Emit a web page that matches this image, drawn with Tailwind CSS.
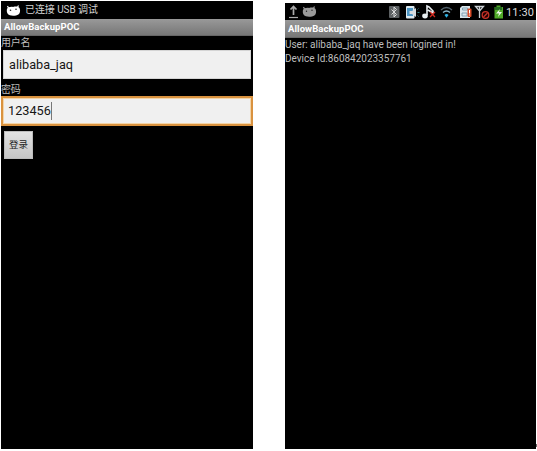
<!DOCTYPE html>
<html lang="zh-CN">
<head>
<meta charset="utf-8">
<title>AllowBackupPOC</title>
<script src="https://cdn.jsdelivr.net/npm/@tailwindcss/browser@4"></script>
</head>
<body class="bg-white w-[537px] h-[451px] overflow-hidden flex items-start font-['Roboto','Noto_Sans_CJK_SC',sans-serif] whitespace-nowrap">
<main class="ml-px mt-px w-[252px] h-[448px] bg-black flex flex-col shrink-0">
  <header class="h-[18px] flex items-center pl-[5px] pb-[2px] text-[10px] text-[#d2d2d2]">
    <svg class="w-[15px] h-[13px] mr-1 mt-[2px] shrink-0" viewBox="0 0 15 13"><path d="M2.500 4 1.500 2M11.400 3.500 12.500 1.500" stroke="#fff" stroke-width="1.200"/><path d="M.8 5.800C1.200 3 4 2.700 7 2.900c3-.6 5.800-.5 6.700 1.600.8 2.300.3 4.800-1.300 6-1.900 1.300-6.100 1.700-8.500.8C1.500 10.500.6 8.500.8 5.800Z" fill="#fff"/><circle cx="4.500" cy="6.200" r=".8" fill="#222"/><circle cx="10" cy="5.300" r=".8" fill="#222"/></svg>
    <span class="tracking-[-0.080px]">已连接 USB 调试</span>
  </header>
  <div class="h-[17px] bg-linear-to-b from-[#999] to-[#777] border-b border-[#666] pl-[3px] text-[9.5px] leading-[15.5px] font-bold text-white tracking-[0.080px]">AllowBackupPOC</div>
  <label class="h-[14px] text-[10px] leading-[14px] text-[#bebebe] tracking-[-0.200px]">用户名</label>
  <div class="mx-[2px] h-[29px] bg-[#f0f0f0] border border-[#d4d4d4] pl-[5px] text-[12.7px] leading-[28px] text-[#151515]">alibaba_jaq</div>
  <label class="mt-[4px] h-[13px] text-[10px] leading-[14px] text-[#bebebe] tracking-[-0.200px]">密码</label>
  <div class="h-[30px] border-2 border-[#d9923f] bg-[#f0f0f0] shadow-[inset_0_0_0_1px_#f3d4a8] pl-[5px] flex items-center text-[12.7px] text-[#151515]">123456<i class="w-px h-[18px] bg-[#777]"></i></div>
  <button class="ml-[3px] mt-[5px] w-[29px] h-[28px] border border-[#bcbcbc] bg-linear-to-b from-[#e2e2e2] to-[#c6c6c6] text-[9.5px] text-[#222]">登录</button>
</main>
<section class="ml-[32px] mt-[3px] w-[251px] h-[446px] bg-black shrink-0">
  <header class="h-[17px] flex items-center pl-[3px] text-[11px] text-[#ddd]">
    <svg class="w-[11px] h-[15px] shrink-0" viewBox="0 0 11 15"><path d="M5.500 11V3M2.500 5.500l3-3 3 3" fill="none" stroke="#aaa" stroke-width="1.700"/><path d="M1 13.500h9" stroke="#aaa" stroke-width="1.200"/></svg>
    <svg class="w-[15px] h-[13px] ml-[3px] shrink-0" viewBox="0 0 15 13"><path d="M2.500 4 1.500 2M11.400 3.500 12.500 1.500" stroke="#999" stroke-width="1.200"/><path d="M.8 5.800C1.200 3 4 2.700 7 2.900c3-.6 5.800-.5 6.700 1.600.8 2.300.3 4.800-1.300 6-1.900 1.300-6.100 1.700-8.500.8C1.500 10.500.6 8.500.8 5.800Z" fill="#999"/><circle cx="4.500" cy="6.200" r=".7" fill="#222"/><circle cx="10" cy="5.300" r=".7" fill="#222"/></svg>
    <svg class="w-[148px] h-[17px] ml-[71px] shrink-0" viewBox="388 3 148 17" fill="none">
      <rect x="389" y="6" width="10.500" height="12" rx="1" fill="#5d6163"/><path d="m391.500 9.500 5 5-2.500 2.500V7l2.500 2.500-5 5" stroke="#ddd"/>
      <rect x="406" y="6" width="8.500" height="12.500" rx="1" fill="#dce9ef"/><path d="M407 8h6v8h-6z" fill="#4c96c5"/><path d="M409.500 11h2.500l4-3v9l-4-3h-2.500z" fill="#d5dce0"/><path d="m417.500 9.500 1-1m-1 4h2m-2 3 1 1" stroke="#2b8184"/>
      <path d="M427 15V6l2 1 4 4v2l-5-3" stroke="#e8edf0" stroke-width="1.600"/><ellipse cx="425" cy="16" rx="2.800" ry="2.400" fill="#e8edf0"/><path d="m430 12 5 5m0-5-5 5" stroke="#d52b20" stroke-width="1.300"/>
      <path d="M441 10q5.500-5 11 0" stroke="#51616b" stroke-width="1.300"/><path d="M443 12.500q3.500-3 7 0" stroke="#8bb7c9" stroke-width="1.400"/><path d="M444.500 15q2-2 4 0l-2 2.800z" fill="#30b4e5"/>
      <path d="M462 6h8v12h-10V8z" fill="#d9e5ea"/><path d="M462.500 8h5v2h-5zM462 13h5v3h-5z" stroke="#6f94aa" stroke-width=".8"/><rect x="467.500" y="8.500" width="4" height="8.500" rx="1" fill="#d84c29"/><path d="M469.500 10v3.500m0 1v1" stroke="#fff"/>
      <path d="M475.500 6.500h8l-4 4.500zM479.500 7v11" stroke="#cbd1d5" stroke-width="1.300"/><circle cx="485.500" cy="15" r="3.300" fill="#210000" stroke="#c63227" stroke-width="1.300"/><path d="m483.500 17 4-4" stroke="#c63227" stroke-width="1.200"/>
      <path d="M494.500 7h2V5.500h4V7h2.500v11.500h-8.500z" fill="#51aa29"/><path d="M495 7h7v3h-7z" fill="#266c20"/><path d="m500 9-4 4.500h3l-1 3.500 4-5h-3z" fill="#eef9e8"/>
      <text x="506" y="16.300" font-size="11" textLength="28" fill="#dedede">11:30</text>
    </svg>
  </header>
  <div class="h-[18px] bg-linear-to-b from-[#999] to-[#777] border-b border-[#666] pl-[3px] text-[9.5px] leading-[17.5px] font-bold text-white tracking-[0.080px]">AllowBackupPOC</div>
  <div class="text-[10px] leading-[13.500px] text-[#bebebe]">
    <p><span class="tracking-[-0.020px]">User: alibaba_jaq have been logined in!</span></p>
    <p><span class="tracking-[-0.020px]">Device Id:860842023357761</span></p>
  </div>
</section>
<i class="mt-[444px] w-px h-[3px] bg-[#666] shrink-0"></i>
</body>
</html>
